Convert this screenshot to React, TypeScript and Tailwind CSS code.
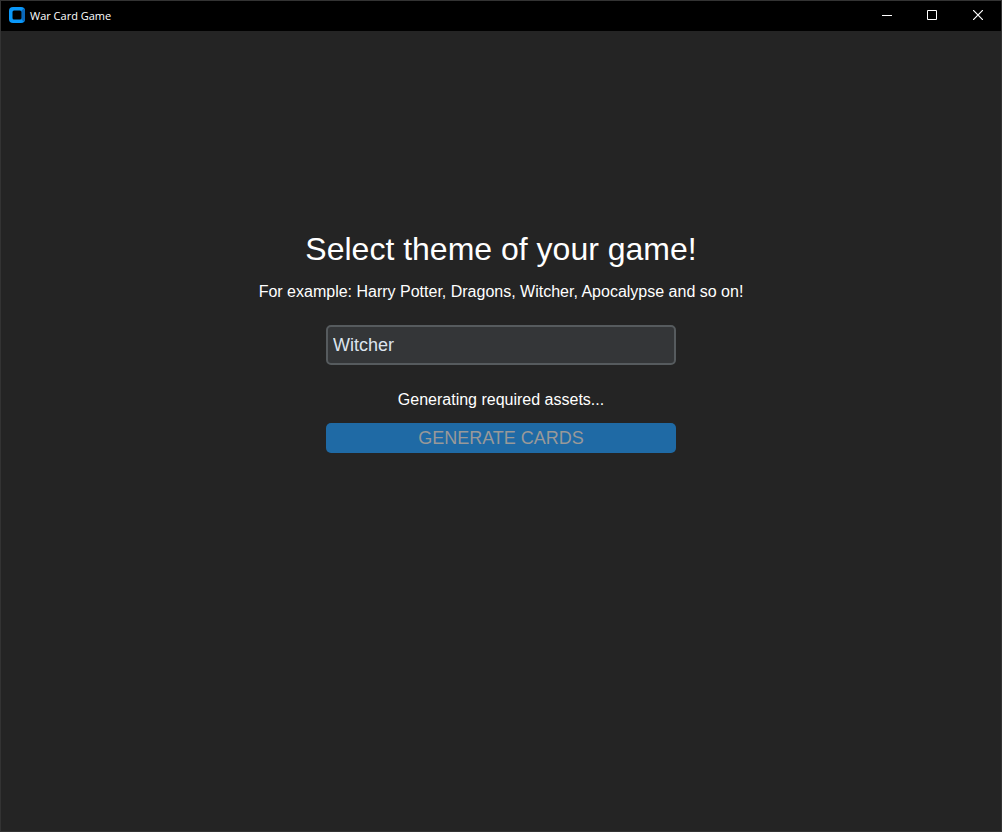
function TitleBar() {
  return (
    <header className="flex h-[30px] shrink-0 items-start bg-black pl-2">
      <svg className="mt-1.5 size-4" viewBox="0 0 16 16" aria-hidden="true">
        <rect width="16" height="16" rx="4" fill="#0a98fa" />
        <path d="M12.5 3.5L15 1.2Q16 2.2 16 4V12Q16 13.8 15 14.8L12.5 12.5Z" fill="#0a66b8" />
        <rect x="3.5" y="3.5" width="9" height="9" rx="1.5" fill="#000" />
      </svg>
      <h1 className="ml-[5px] flex-1 font-['Open_Sans','Noto_Sans',sans-serif] text-[11px] leading-[30px] text-white">War Card Game</h1>
      <button type="button" aria-label="Minimize" className="flex h-7 w-[45px] items-center justify-center">
        <svg className="size-[10px]" viewBox="0 0 10 10"><path d="M0 5.5h10" stroke="#fff" /></svg>
      </button>
      <button type="button" aria-label="Maximize" className="flex h-7 w-[46px] items-center justify-center">
        <svg className="size-[10px]" viewBox="0 0 10 10"><path d="M.5.5h9v9h-9z" fill="none" stroke="#fff" /></svg>
      </button>
      <button type="button" aria-label="Close" className="flex h-7 w-[46px] items-center justify-center">
        <svg className="size-[10px]" viewBox="0 0 10 10"><path d="M0 0l10 10M10 0L0 10" stroke="#fff" strokeWidth="1.2" /></svg>
      </button>
    </header>
  );
}

export default function App() {
  return (
    <div className="flex min-h-screen flex-col border border-[#333333] bg-[#242424] font-['Liberation_Sans',Arial,sans-serif] text-white">
      <TitleBar />
      <main className="flex flex-1 flex-col items-center pt-[198px]">
        <h2 className="text-[32px] leading-10">Select theme of your game!</h2>
        <p className="mt-[11px] text-base leading-6">For example: Harry Potter, Dragons, Witcher, Apocalypse and so on!</p>
        <form className="mt-[21px] flex w-full max-w-[350px] flex-col">
          <input
            aria-label="Theme"
            defaultValue="Witcher"
            className="h-10 rounded-[5px] border-2 border-[#565b5e] bg-[#343638] px-[5px] text-lg text-[#dce4ee] outline-none"
          />
          <p role="status" className="mt-[23px] text-center text-base leading-6">Generating required assets...</p>
          <button type="button" disabled className="mt-[11px] h-[30px] rounded-[5px] bg-[#1f6aa5] text-lg leading-[30px] text-[#999999]">
            GENERATE CARDS
          </button>
        </form>
      </main>
    </div>
  );
}
